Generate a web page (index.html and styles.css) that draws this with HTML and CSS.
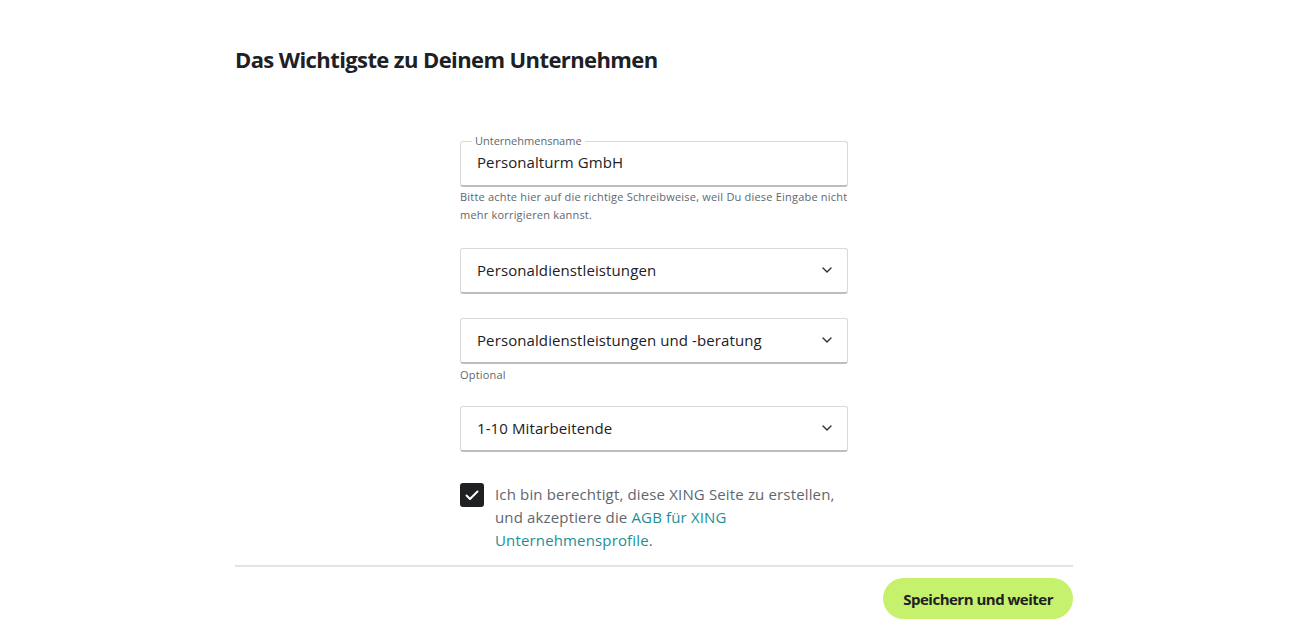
FILE: index.html
```html
<!DOCTYPE html>
<html lang="de">
<head>
<meta charset="utf-8">
<title>Das Wichtigste zu Deinem Unternehmen</title>
<link rel="stylesheet" href="styles.css">
</head>
<body>
<main class="page">
  <h1 class="title">Das Wichtigste zu Deinem Unternehmen</h1>
  <form class="form">
    <div class="field">
      <fieldset class="box outlined">
        <legend class="legend">Unternehmensname</legend>
        <span class="value">Personalturm GmbH</span>
      </fieldset>
      <p class="hint">Bitte achte hier auf die richtige Schreibweise, weil Du diese Eingabe nicht mehr korrigieren kannst.</p>
    </div>
    <div class="field">
      <div class="box select">
        <span class="value">Personaldienstleistungen</span>
        <svg class="chev" width="10" height="6" viewBox="0 0 10 6"><path d="M1 1 L5 5 L9 1" fill="none" stroke="#2b3034" stroke-width="1.4" stroke-linecap="round" stroke-linejoin="round"/></svg>
      </div>
    </div>
    <div class="field gap-s">
      <div class="box select">
        <span class="value">Personaldienstleistungen und -beratung</span>
        <svg class="chev" width="10" height="6" viewBox="0 0 10 6"><path d="M1 1 L5 5 L9 1" fill="none" stroke="#2b3034" stroke-width="1.4" stroke-linecap="round" stroke-linejoin="round"/></svg>
      </div>
      <p class="hint optional">Optional</p>
    </div>
    <div class="field">
      <div class="box select">
        <span class="value">1-10 Mitarbeitende</span>
        <svg class="chev" width="10" height="6" viewBox="0 0 10 6"><path d="M1 1 L5 5 L9 1" fill="none" stroke="#2b3034" stroke-width="1.4" stroke-linecap="round" stroke-linejoin="round"/></svg>
      </div>
    </div>
    <label class="check">
      <span class="checkbox">
        <svg width="14" height="11" viewBox="0 0 14 11"><path d="M1.5 5.5 L5 9 L12.5 1.5" fill="none" stroke="#fff" stroke-width="2" stroke-linecap="round" stroke-linejoin="round"/></svg>
      </span>
      <span class="check-text">Ich bin berechtigt, diese XING Seite zu erstellen, und akzeptiere die <a class="link" href="#">AGB für XING Unternehmensprofile</a>.</span>
    </label>
  </form>
  <div class="footer">
    <button class="primary" type="button">Speichern und weiter</button>
  </div>
</main>
</body>
</html>
```

FILE: styles.css
```css
* { box-sizing: border-box; }
html, body { margin: 0; padding: 0; background: #fff; }
body {
  font-family: "Open Sans", "Noto Sans", "Liberation Sans", sans-serif;
  color: #1d2124;
}
.page {
  width: 838px;
  margin-left: 235px;
  padding-top: 42px;
}
.title {
  margin: 0;
  font-size: 22px;
  line-height: 34px;
  font-weight: 700;
  letter-spacing: -0.6px;
  color: #1d2124;
}
.form {
  width: 388px;
  margin: 65px auto 0;
  display: flex;
  flex-direction: column;
}
.field { margin-bottom: 24px; }
.field.gap-s { margin-bottom: 22px; }
.box {
  position: relative;
  height: 46px;
  border: 1px solid #d6dadd;
  border-bottom: 2px solid #b9c0c5;
  border-radius: 3px;
  display: flex;
  align-items: center;
  padding: 0 16px 1px;
  background: #fff;
}
.outlined {
  margin: 0;
  min-width: 0;
  padding: 0 16px;
  height: 51px;
  margin-top: -5px;
}
.legend {
  font-size: 11px;
  line-height: 10px;
  color: #5e6770;
  padding: 0 3px;
  margin-left: -5px;
}
.outlined .value { margin-top: -7px; }
.value {
  font-size: 15px;
  letter-spacing: 0.1px;
  color: #1d2124;
  flex: 1;
}
.chev { margin-right: -1px; }
.hint {
  margin: 1px 0 0;
  font-size: 11px;
  letter-spacing: 0.2px;
  line-height: 18px;
  color: #5e6770;
}
.hint.optional { margin-top: 2px; }
.check {
  display: flex;
  align-items: flex-start;
  gap: 11px;
  margin-top: 7px;
}
.checkbox {
  flex: none;
  width: 24px;
  height: 24px;
  border-radius: 3px;
  background: #1d2124;
  display: flex;
  align-items: center;
  justify-content: center;
}
.check-text {
  font-size: 15px;
  letter-spacing: 0.15px;
  line-height: 23px;
  color: #5e6770;
}
.link { color: #1d8f94; text-decoration: none; }
.footer {
  margin-top: 13px;
  border-top: 2px solid #dfe5e9;
  padding-top: 11px;
  display: flex;
  justify-content: flex-end;
}
.primary {
  height: 41px;
  padding: 0 20px;
  border: none;
  border-radius: 21px;
  background: #c6f16d;
  color: #1d2124;
  font-family: inherit;
  font-size: 15px;
  font-weight: 700;
  letter-spacing: -0.5px;
}
```
